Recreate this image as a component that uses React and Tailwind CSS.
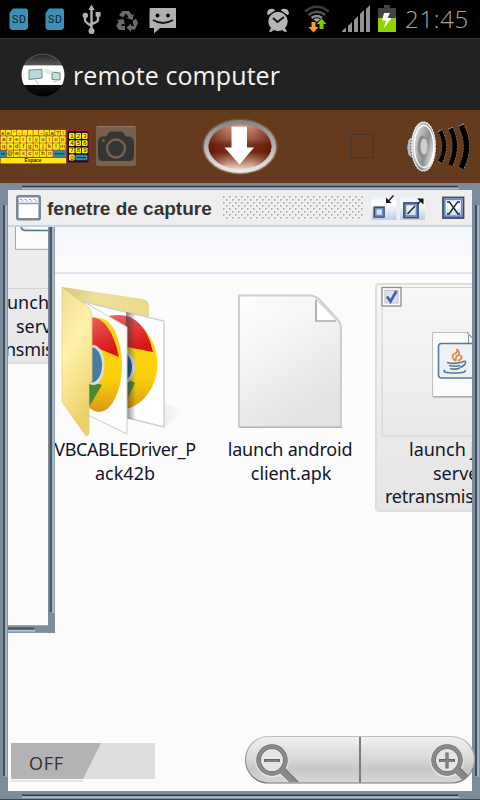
import React from "react";

function SdCard() {
  return (
    <svg width="20" height="23" viewBox="0 0 20 23">
      <path d="M4 0.5H17.5L19 2V20L17 22H2.5L0.5 20V5Z" fill="#3c8fb5" />
      <text x="10" y="15" textAnchor="middle" fontSize="10.5" fontFamily="Roboto, sans-serif" textLength="14" fill="#0b1c26">SD</text>
    </svg>
  );
}

function StatusBar() {
  return (
    <div className="flex h-[38px] w-full shrink-0 bg-black">
      <div className="flex items-start pl-[9px] pt-[8px]">
        <SdCard />
        <div className="w-[16px]" />
        <SdCard />
      </div>
      <svg className="shrink-0" width="182" height="38" viewBox="65 0 182 38">
        <g stroke="#b1b1b1" fill="none" strokeWidth="2.4">
          <path d="M91.5 8V31M85 16V20Q85 22 91.5 26M98 15V20Q98 22 91.5 24" />
        </g>
        <g fill="#b1b1b1">
          <path d="M91.5 4.5L94.7 10H88.3Z" />
          <circle cx="85.3" cy="15.5" r="2.7" />
          <rect x="95.6" y="12" width="5" height="4.6" />
          <circle cx="91.5" cy="31" r="3" />
        </g>
        <g fill="#6b6b6b">
          <path d="M122.5 11H129L132 15L134 14L132.5 20L126.500 18L128.500 17L126 13.500L123 17.500L119 15Z" />
          <path d="M117 20L123.500 19L125 24.500L122.700 23.500L121 26H125V30H119L116.200 26L118.800 21.500Z" />
          <path d="M132.500 21L136 18.500L138 23L135 29.500H131V32L126.500 27.500L131 23.500V26H134Z" />
        </g>
        <path d="M150 8H176V28H160L154 33.500V28H149.500V9Z" fill="#b1b1b1" />
        <circle cx="157.500" cy="15.500" r="1.900" />
        <circle cx="168" cy="15.500" r="1.900" />
        <path d="M153 20Q163 26 173 20" fill="none" stroke="#111" strokeWidth="1.800" />
      </svg>
      <svg className="shrink-0" width="158" height="38" viewBox="247 0 158 38">
        <g fill="#b5b5b5">
          <circle cx="278" cy="21.500" r="9.700" />
          <path d="M267 14Q267 8 274 9L275 10.500L268.500 15ZM289 14Q289 8 282 9L281 10.500L287.500 15Z" />
          <path d="M271 28L269 31.500L271 32L274 30ZM285 28L287 31.500L285 32L282 30Z" />
        </g>
        <path d="M273 18L277.500 22L284 17" fill="none" stroke="#111" strokeWidth="1.800" />
        <g fill="none" strokeWidth="2.600">
          <path d="M305 11.500Q316.800 2 328.700 11.500" stroke="#3b3b3b" />
          <path d="M308.500 15Q316.800 8.500 325.200 15" stroke="#555" />
          <path d="M311.500 18Q316.800 14 322 18" stroke="#8b8b8b" />
        </g>
        <path d="M313.500 19.500Q316.800 17 320 19.500L316.800 22Z" fill="#aaa" />
        <path d="M311.500 22H315.500V27H318.500L313.500 32.500L308.500 27H311.500Z" fill="#ff9b35" />
        <path d="M319.500 29V24H316.500L321.500 18.500L326.500 24H323.500V29Z" fill="#7fc500" />
        <g fill="#929292">
          <path d="M342 32V31L346 27.500V32Z" />
          <path d="M348 32V26L352 22V32Z" />
          <path d="M354 32V20L358 16V32Z" />
          <path d="M360 32V14L364 10V32Z" />
          <path d="M366 32V9L370 5V32Z" />
        </g>
        <path d="M384 5H390V8H396V18H378V8H384Z" fill="#434343" />
        <rect x="378" y="18" width="18" height="14" fill="#90d300" />
        <path d="M384 13H390L387.500 18H391.500L384 28L386 20.500H382Z" fill="#fff" />
      </svg>
      <div className="whitespace-nowrap font-['Open_Sans',sans-serif] text-[24px] font-light leading-[37px] tracking-[0.7px] text-[#a6a6a6]">
        21:45
      </div>
    </div>
  );
}

function AppLogo() {
  return (
    <svg width="44" height="46" viewBox="21 52 44 46">
      <defs>
        <linearGradient id="orb" x1="0" y1="0" x2="0" y2="1">
          <stop offset="0" stopColor="#222" />
          <stop offset="0.260" stopColor="#555" />
          <stop offset="0.290" stopColor="#fff" />
          <stop offset="0.720" stopColor="#fff" />
          <stop offset="0.740" stopColor="#111" />
          <stop offset="1" stopColor="#000" />
        </linearGradient>
      </defs>
      <circle cx="43" cy="75" r="21.500" fill="url(#orb)" />
      <path d="M25 64Q31 54.500 43 54Q55 54.500 61 64" fill="none" stroke="#777" strokeWidth="0.600" />
      <path d="M29 70L42 69.500V78L29 79.500Z" fill="#b9dadb" stroke="#6a787c" strokeWidth="0.900" />
      <path d="M52 72L60 73V80L52 79.500Z" fill="#c2e0d8" stroke="#6a787c" strokeWidth="0.900" />
      <path d="M42 70Q48 67 53 72L49 75Z" fill="#dfeee2" />
      <path d="M35 79L38 84M56 80V82H53" stroke="#ccc" fill="none" />
    </svg>
  );
}

function TitleBar() {
  return (
    <header className="flex h-[72px] w-full shrink-0 items-start border-t border-[#343434] bg-[#222222] pl-[21px]">
      <div className="pt-[13px]"><AppLogo /></div>
      <h1 className="whitespace-nowrap pl-[8px] pt-[18px] font-['Open_Sans',sans-serif] text-[25px] leading-[36px] tracking-[0.08px] text-[#f4f4f4]">
        remote computer
      </h1>
    </header>
  );
}

const KEY_ROWS = ["ée\"-:,_-ça?!", "azertyuiop", "qsdfghjklm"];

function Keyboard() {
  const keyText = { fontFamily: "Liberation Sans, sans-serif", fontWeight: 400, fill: "#2c2500" };
  return (
    <svg width="90" height="38" viewBox="0 127 90 38">
      <rect x="0" y="128.500" width="67" height="34.500" fill="#a8461f" />
      <rect x="66.500" y="128.500" width="23" height="34.500" fill="#ab1734" />
      <rect x="67.500" y="130" width="21" height="31.500" rx="1.500" fill="#141414" />
      {KEY_ROWS.map((row, r) =>
        [...row].map((k, i) => {
          const step = 65.5 / row.length;
          const y = r === 0 ? 129 : 128.300 + r * 7;
          return (
            <g key={r + "-" + i}>
              <rect x={0.600 + i * step} y={y} width={step - 0.600} height={r === 0 ? 5.400 : 6.400} rx="0.700" fill="#ffe71c" />
              <text x={0.300 + i * step + step / 2} y={y + 4.700} textAnchor="middle" fontSize="6" style={keyText}>{k}</text>
            </g>
          );
        })
      )}
      <rect x="0" y="149.500" width="6.300" height="6.500" fill="#2a8ba5" />
      {[..."@wxcvbn"].map((k, i) => (
        <g key={k}>
          <rect x={7 + i * 6.600} y="149.500" width="6" height="6.400" fill="#ffe71c" />
          <text x={10 + i * 6.600} y="154.400" textAnchor="middle" fontSize="6" style={keyText}>{k}</text>
        </g>
      ))}
      <rect x="53" y="149.500" width="13" height="6.500" fill="#2a8ba5" />
      <path d="M54.500 152.800H64.500M1 152.800H5" stroke="#153c48" />
      <rect x="0.700" y="157" width="65.300" height="5.300" fill="#ffe71c" />
      <text x="33" y="161.300" textAnchor="middle" fontSize="4.800" style={{ ...keyText, fontWeight: 700 }}>Espace</text>
      {[..."1234567890"].map((k, i) => (
        <g key={k}>
          <rect x={69 + (i % 3) * 6.500} y={132 + Math.floor(i / 3) * 7.200} width="5.600" height="5.900" rx="1" fill="#ffe71c" />
          <text x={71.800 + (i % 3) * 6.500} y={137 + Math.floor(i / 3) * 7.200} textAnchor="middle" fontSize="6" style={keyText}>{k}</text>
        </g>
      ))}
      <rect x="75.500" y="153.700" width="12" height="5.600" rx="1" fill="#2a8ba5" />
      <path d="M77 156.500H86" stroke="#153c48" />
    </svg>
  );
}

function Camera() {
  return (
    <div className="flex h-[40px] w-[40px] items-center justify-center rounded-[2px] border-t border-[#917866] bg-[#7a604c]">
      <svg width="38" height="36" viewBox="97 128 38 36">
        <path d="M98 142Q98 137 103 136.500H105Q107 136.500 108 133.500Q109 131.500 111 131.500H121Q123 131.500 124 133.500Q125 136.500 127 136.500H129Q134 137 134 142V155Q134 161 129 161H103Q98 161 98 155Z" fill="#353535" />
        <circle cx="116" cy="148.500" r="9" fill="none" stroke="#7a604c" strokeWidth="2.400" />
        <circle cx="103.500" cy="140.500" r="1.500" fill="#7a604c" />
      </svg>
    </div>
  );
}

function DownloadOrb() {
  return (
    <svg width="78" height="60" viewBox="201 116 78 60">
      <defs>
        <linearGradient id="ring" x1="0" y1="0" x2="0" y2="1">
          <stop offset="0" stopColor="#858382" />
          <stop offset="0.500" stopColor="#b8b2af" />
          <stop offset="1" stopColor="#efeceb" />
        </linearGradient>
        <linearGradient id="disc" x1="0" y1="0" x2="0" y2="1">
          <stop offset="0" stopColor="#c28e7d" />
          <stop offset="0.330" stopColor="#a05a44" />
          <stop offset="0.460" stopColor="#762f1a" />
          <stop offset="0.620" stopColor="#71290f" />
          <stop offset="1" stopColor="#f0cdbc" />
        </linearGradient>
        <linearGradient id="side" x1="0" x2="1">
          <stop offset="0" stopColor="#5a1405" stopOpacity="0.650" />
          <stop offset="0.300" stopColor="#5a1405" stopOpacity="0" />
          <stop offset="0.700" stopColor="#5a1405" stopOpacity="0" />
          <stop offset="1" stopColor="#5a1405" stopOpacity="0.650" />
        </linearGradient>
      </defs>
      <ellipse cx="240" cy="145.500" rx="37.500" ry="28" fill="url(#ring)" opacity="0.350" />
      <ellipse cx="240" cy="145.500" rx="36" ry="26.500" fill="url(#ring)" />
      <ellipse cx="240" cy="145.500" rx="31.500" ry="22.500" fill="url(#disc)" />
      <ellipse cx="240" cy="145.500" rx="31.500" ry="22.500" fill="url(#side)" />
      <path d="M231.500 125.500H247V146.500H254L239.500 163.500L224.500 146.500H231.500Z" fill="#fff" />
    </svg>
  );
}

function Speaker() {
  return (
    <svg width="66" height="54" viewBox="405 119 66 54">
      <defs>
        <linearGradient id="metal" x1="0" x2="1" y2="0.500">
          <stop offset="0" stopColor="#f4f4f4" />
          <stop offset="0.450" stopColor="#b5b5b5" />
          <stop offset="0.700" stopColor="#8d8d8d" />
          <stop offset="1" stopColor="#e8e8e8" />
        </linearGradient>
      </defs>
      <path d="M413 134L408 139Q405.500 147 408 154L413 158Z" fill="#bbb" stroke="#222" strokeWidth="0.700" />
      <ellipse cx="423.500" cy="145.500" rx="12" ry="24.700" fill="url(#metal)" stroke="#f7f7f7" strokeWidth="1.200" />
      <ellipse cx="423.500" cy="145.500" rx="12.600" ry="25.300" fill="none" stroke="#222" strokeWidth="0.800" strokeDasharray="1.500 1.500" />
      <ellipse cx="424" cy="145.500" rx="9.800" ry="21" fill="none" stroke="#fff" strokeWidth="1.300" />
      <ellipse cx="422.500" cy="145.500" rx="5" ry="11" fill="#8b8b8b" />
      <ellipse cx="424" cy="145.500" rx="3.500" ry="8" fill="#cfcfcf" />
      <g fill="none" stroke="#ddd" strokeDasharray="1 2">
        <path d="M440 129.500Q448.500 145 440 161.500" strokeWidth="4.600" />
        <path d="M450.500 127Q459 145 450.500 164.500" strokeWidth="5.200" />
        <path d="M461 124Q472 145 461 167.500" strokeWidth="6.100" />
      </g>
      <g fill="none" stroke="#000">
        <path d="M440 130Q448.500 145 440 161" strokeWidth="4" />
        <path d="M450.500 127.500Q459 145 450.500 164" strokeWidth="4.600" />
        <path d="M461 124.500Q472 145 461 167" strokeWidth="5.500" />
      </g>
    </svg>
  );
}

function Toolbar() {
  return (
    <div className="flex h-[73px] w-full shrink-0 items-center bg-[#643b1c]">
      <Keyboard />
      <div className="-mt-[2px] pl-[6px]"><Camera /></div>
      <div className="pl-[65px]"><DownloadOrb /></div>
      <div className="-mt-[1px] ml-[71px] h-[24px] w-[24px] border border-[#49362a]" />
      <div className="pl-[31px]"><Speaker /></div>
    </div>
  );
}

function WindowTitle() {
  return (
    <div className="flex h-[37px] shrink-0 items-start border-b-2 border-[#c5d6e6] bg-[#eeeeee] pl-[8px]">
      <svg className="mt-[5px] shrink-0" width="25" height="26" viewBox="0 0 25 26">
        <rect x="1.300" y="1.300" width="22.400" height="23" rx="1.500" fill="#fff" stroke="#788896" strokeWidth="2.600" />
        <path d="M3 8.500H22" stroke="#8b9aa8" strokeWidth="1.500" />
        <path d="M4 4.500H21M5.500 6H21" stroke="#8d9ddb" strokeWidth="1.200" strokeDasharray="2 2.500" />
      </svg>
      <h2 className="w-[181px] shrink-0 whitespace-nowrap pl-[6px] pt-[5px] font-['Liberation_Sans',Arial,sans-serif] text-[19px] font-bold leading-[28px] text-[#333333]">
        fenetre de capture
      </h2>
      <svg className="mt-[5px] shrink-0" width="141" height="27">
        <defs>
          <pattern id="grip" width="6" height="6" patternUnits="userSpaceOnUse">
            <rect x="0.500" y="0.500" width="2" height="1.500" fill="#fff" />
            <rect x="3.500" y="3.500" width="2" height="1.500" fill="#fff" />
            <rect x="1" y="1" width="1.500" height="1.500" fill="#8f9dac" />
            <rect x="4" y="4" width="1.500" height="1.500" fill="#8f9dac" />
          </pattern>
          <linearGradient id="btn" x1="0" y1="0" x2="0" y2="1">
            <stop offset="0" stopColor="#e5edf6" />
            <stop offset="0.350" stopColor="#fff" />
            <stop offset="1" stopColor="#b8cfe5" />
          </linearGradient>
        </defs>
        <rect width="141" height="25" fill="url(#grip)" />
      </svg>
      <svg className="ml-[7px] mt-[3px] shrink-0" width="98" height="30" viewBox="370 193 98 30">
        <rect x="371.500" y="195" width="25" height="25" fill="url(#btn)" />
        <rect x="400" y="195" width="25" height="25" fill="url(#btn)" />
        <g fill="none">
          <rect x="374.200" y="207.200" width="9.800" height="9.800" stroke="#404a5c" strokeWidth="1.600" />
          <rect x="375.800" y="208.800" width="6.800" height="6.800" stroke="#6987cf" strokeWidth="1.500" />
          <rect x="404" y="203" width="14" height="14.500" stroke="#404a5c" strokeWidth="1.800" />
          <rect x="405.600" y="204.600" width="10.800" height="11.300" stroke="#6987cf" strokeWidth="1.500" />
          <path d="M407.500 214L415 206M417.500 204L422 200" stroke="#202020" strokeWidth="1.400" />
          <path d="M393.500 195.500L387.500 202" stroke="#222" strokeWidth="1.500" />
        </g>
        <path d="M386 197.500V203H391.500Z M417 198.500H423.500V204.500Z" fill="#161616" />
        <rect x="443" y="197.500" width="20.500" height="20.500" fill="url(#btn)" stroke="#404a5c" strokeWidth="1.800" />
        <rect x="444.800" y="199.300" width="16.900" height="16.900" fill="none" stroke="#6987cf" strokeWidth="1.700" />
        <path d="M447 202H449.500L458 214H460M460 202H457.500L449 214H447" fill="none" stroke="#1e2635" strokeWidth="1.400" />
      </svg>
    </div>
  );
}

function NestedPane() {
  return (
    <div className="flex h-[406px] w-[47px] shrink-0">
      <div className="flex w-[40px] shrink-0 flex-col">
        <div className="flex h-[137px] flex-col overflow-hidden whitespace-nowrap border-b-2 border-[#dedede] bg-linear-to-b from-[#eeeeee] to-[#e8e8e8] font-['Noto_Sans','Open_Sans',sans-serif] text-[18px] leading-[23.500px] text-[#141428]">
          <svg className="shrink-0" width="40" height="62" viewBox="8 227 40 62">
            <path d="M15 227V249H48V227Z" fill="#fcfcfc" />
            <path d="M15.500 227V249.300H48" stroke="#a5a5a5" fill="none" />
            <path d="M21 227Q22 230.500 25 230.500H48" stroke="#547592" strokeWidth="1.500" fill="#e9eef2" />
            <path d="M8 288.500H48" stroke="#d2d6d6" />
          </svg>
          <div className="-ml-[1px] pt-[2px]">unch</div>
          <div className="pl-[8px]">serv</div>
          <div className="-ml-[3px] tracking-[-0.300px]">nsmis</div>
        </div>
        <div className="flex-1 bg-[#fcfcfc]" />
        <svg className="shrink-0" width="40" height="8">
          <rect width="40" height="8" fill="#7b8c9a" />
          <path d="M0 0.500H40" stroke="#98a6b2" />
          <path d="M0 3.500H26" stroke="#485058" strokeWidth="2" />
          <path d="M0 5.800H27" stroke="#b0c8de" strokeWidth="1.500" />
          <path d="M0 7.500H40" stroke="#8496a5" />
        </svg>
      </div>
      <svg className="shrink-0" width="7" height="406">
        <rect width="7" height="406" fill="#7b8c9a" />
        <path d="M2.800 0V385" stroke="#485058" strokeWidth="2" />
        <path d="M5.300 0V386" stroke="#a9bfd6" strokeWidth="2" />
      </svg>
    </div>
  );
}

function ChromeFolder() {
  return (
    <svg width="130" height="160" viewBox="60 280 130 160">
      <defs>
        <linearGradient id="front" x1="0" y1="0" x2="0.300" y2="1">
          <stop offset="0" stopColor="#ecdd91" />
          <stop offset="0.450" stopColor="#fff2ac" />
          <stop offset="1" stopColor="#efcf68" />
        </linearGradient>
        <linearGradient id="back" x1="0" x2="1">
          <stop offset="0" stopColor="#d8c677" />
          <stop offset="0.400" stopColor="#eee198" />
          <stop offset="1" stopColor="#ead98c" />
        </linearGradient>
        <linearGradient id="red" x1="0" y1="0" x2="0.500" y2="1">
          <stop offset="0" stopColor="#ed6a60" />
          <stop offset="1" stopColor="#d81516" />
        </linearGradient>
        <linearGradient id="yellow" x1="0" y1="0" x2="0" y2="1">
          <stop offset="0" stopColor="#fcd719" />
          <stop offset="0.650" stopColor="#fbcf0b" />
          <stop offset="1" stopColor="#d89a16" />
        </linearGradient>
        <linearGradient id="shade" x1="0" x2="1">
          <stop offset="0" stopColor="#333" stopOpacity="0.600" />
          <stop offset="1" stopColor="#333" stopOpacity="0" />
        </linearGradient>
        <linearGradient id="floor" x1="0" x2="1">
          <stop offset="0" stopColor="#d8d8d8" />
          <stop offset="1" stopColor="#fcfcfc" />
        </linearGradient>
        <clipPath id="rearPage"><path d="M126 312L164 321V427L126 418Z" /></clipPath>
        <clipPath id="nearPage"><path d="M91 311L127 327V434L88 415Z" /></clipPath>
      </defs>
      <path d="M164 402L184 411L165 427Z" fill="url(#floor)" opacity="0.400" />
      <path d="M62 287L143 299Q149 301 149 306V340H80Z" fill="url(#back)" />
      <path d="M84 302L164 321V427L120 416Z" fill="#fff" stroke="#d1d1d1" strokeWidth="1.500" />
      <ellipse cx="118" cy="364" rx="39.500" ry="46" fill="url(#yellow)" />
      <path d="M104 317Q143 306 153 352L127 347L112 350Z" fill="url(#red)" />
      <g clipPath="url(#rearPage)">
        <path d="M112 370L135 383L126 402Z" fill="#478a32" />
        <ellipse cx="121" cy="367" rx="14" ry="18" fill="#d9e2e5" />
        <ellipse cx="121" cy="367" rx="11" ry="15" fill="#19589e" />
        <rect x="126" y="300" width="10" height="130" fill="url(#shade)" />
      </g>
      <path d="M84 302L127 327V434L88 415Z" fill="#fdfdfd" stroke="#cccccc" />
      <g clipPath="url(#nearPage)">
        <ellipse cx="99" cy="365" rx="23" ry="47" fill="url(#yellow)" />
        <path d="M80 320Q108 307 119 357L90 345Z" fill="url(#red)" />
        <path d="M85 380L102 385L89 407L85 410Z" fill="#4a892f" />
        <ellipse cx="93" cy="365" rx="11.500" ry="20" fill="#d7dde0" />
        <ellipse cx="92" cy="365" rx="10" ry="17.500" fill="#477ba3" />
      </g>
      <path d="M62 287L88 307Q91 309 92 315V381L89 384V434L86 436L62 402Z" fill="url(#front)" stroke="#e1cb79" strokeWidth="0.700" />
    </svg>
  );
}

function BlankDoc() {
  return (
    <svg width="120" height="160" viewBox="230 280 120 160">
      <defs>
        <linearGradient id="paper" x1="0" y1="0" x2="0.500" y2="1">
          <stop offset="0" stopColor="#fdfdfd" />
          <stop offset="0.350" stopColor="#f6f6f6" />
          <stop offset="1" stopColor="#e3e3e3" />
        </linearGradient>
      </defs>
      <path d="M239 295.500H311Q315 296 319 299L337 319Q341 323 341 329V427H239Z" fill="url(#paper)" stroke="#cdcdcd" strokeWidth="2" />
      <path d="M240 427.500H341" stroke="#b2b2b2" />
      <path d="M316 300V321.500H336Z" fill="#fff" />
      <path d="M316 300V321H336" fill="none" stroke="#a6a6a6" strokeWidth="1.700" />
      <path d="M316 299L338 321" stroke="#d8d8d8" strokeWidth="1.500" />
    </svg>
  );
}

function JavaTile() {
  return (
    <svg className="shrink-0" width="97" height="155" viewBox="375 283 97 155">
      <defs>
        <linearGradient id="tile" x1="0" y1="0" x2="0" y2="1">
          <stop offset="0" stopColor="#f6f7f7" />
          <stop offset="1" stopColor="#e9e9e9" />
        </linearGradient>
      </defs>
      <path d="M476 287.500H382V436H476Z" fill="url(#tile)" stroke="#cfd3d3" />
      <rect x="382" y="287.500" width="19" height="18.500" fill="#f8f8f8" stroke="#8b8f91" strokeWidth="1.300" />
      <rect x="385" y="290.500" width="13" height="12.500" fill="#dfe3e8" stroke="#bcc2ca" />
      <path d="M387 296.500L390.500 301.500L396.500 291" fill="none" stroke="#4761ae" strokeWidth="2.800" />
      <path d="M432.500 332.500H467L476 341V396.500H432.500Z" fill="#fbfbfa" stroke="#bebebe" />
      <path d="M433 397H472" stroke="#9d9d9d" />
      <path d="M467 332L472 338M468.500 335V344" fill="none" stroke="#8c8c8c" />
      <rect x="438.500" y="343.500" width="42" height="34.500" rx="3" fill="#eef1f3" stroke="#55799a" strokeWidth="1.600" />
      <path d="M456 361Q450 357 454 354Q459 352 456.500 349Q462 353 457 356Q455 358 456 361M458 361Q465 357 459 355" fill="none" stroke="#ed8338" strokeWidth="1.700" />
      <g fill="none" stroke="#507a99" strokeWidth="1.600">
        <path d="M447 362.500Q455 364.500 462 362M449 365.500Q455 367 460 365.500M450 368.500Q455 370 460 368M462 362Q467 360 465 364Q463 367 460 367M445 370Q441 373 455 373Q467 373 465 370" />
      </g>
    </svg>
  );
}

const labelClass =
  "whitespace-nowrap font-['Noto_Sans','Open_Sans',sans-serif] text-[18px] leading-[23.500px] text-[#141428]";

function FileList() {
  return (
    <div className="flex min-w-0 flex-1 flex-col overflow-hidden">
      <div className="h-[47px] shrink-0 border-b-2 border-[#dde8f4] bg-linear-to-b from-[#f4f7fb] to-[#fcfcfc]" />
      <div className="flex items-start pt-[6px]">
        <div className="flex w-[140px] shrink-0 flex-col items-center">
          <ChromeFolder />
          <div className={labelClass + " -mt-[2px] tracking-[-0.400px]"}>VBCABLEDriver_P</div>
          <div className={labelClass}>ack42b</div>
        </div>
        <div className="ml-[20px] flex w-[150px] shrink-0 flex-col items-center">
          <BlankDoc />
          <div className={labelClass + " -mt-[2px] tracking-[-0.200px]"}>launch android</div>
          <div className={labelClass + " pl-[2px] tracking-[-0.100px]"}>client.apk</div>
        </div>
        <div className="ml-[10px] mt-[3px] flex h-[229px] w-[120px] shrink-0 flex-col rounded-[4px] border-2 border-[#dedede] bg-linear-to-b from-[#f7f7f7] to-[#e5e5e5]">
          <div className="-ml-[2px] -mt-[2px] flex"><JavaTile /></div>
          <div className={labelClass + " pl-[32px]"}>launch java</div>
          <div className={labelClass + " pl-[56px]"}>server</div>
          <div className={labelClass + " pl-[8px] tracking-[-0.200px]"}>retransmission</div>
        </div>
      </div>
    </div>
  );
}

function VerticalEdge() {
  return (
    <svg className="shrink-0" width="8" height="601">
      <rect width="8" height="601" fill="#7b8c9a" />
      <path d="M4 15V586" stroke="#454e57" strokeWidth="2" />
      <path d="M6.200 15V587" stroke="#a3b8ce" strokeWidth="2" />
    </svg>
  );
}

function HorizontalEdge({ height, dark }) {
  return (
    <svg className="shrink-0" width="480" height={height}>
      <rect width="480" height={height} fill="#7b8c9a" />
      <path d={`M22 ${dark}H458`} stroke="#343c44" strokeWidth="1.500" />
      <path d={`M22 ${dark + 2}H459`} stroke="#a9bfd5" strokeWidth="1.600" />
    </svg>
  );
}

function CaptureWindow() {
  return (
    <div className="flex flex-1 flex-col">
      <HorizontalEdge height={7} dark={3.5} />
      <div className="flex h-[601px]">
        <VerticalEdge />
        <div className="flex w-[464px] flex-col bg-[#fcfcfc]">
          <WindowTitle />
          <div className="flex flex-1">
            <NestedPane />
            <FileList />
          </div>
        </div>
        <VerticalEdge />
      </div>
      <HorizontalEdge height={8} dark={4.2} />
      <div className="h-[1px] bg-[#643b1c]" />
    </div>
  );
}

function OffSwitch() {
  return (
    <div className="absolute left-[11px] top-[743px] flex h-[39px] w-[144px] flex-col">
      <div className="h-[36px] bg-[#dedede]">
        <div className="h-[36px] w-[90px] bg-[#b3b3b3] pl-[18px] font-['Open_Sans',sans-serif] text-[18px] leading-[40px] tracking-[0.700px] text-[#303030] [clip-path:polygon(0_0,100%_0,72px_100%,0_100%)]">
          OFF
        </div>
      </div>
      <div className="mt-[1px] h-[2px] w-[72px] bg-[#e4e4e4]" />
    </div>
  );
}

function ZoomControls() {
  return (
    <svg className="absolute left-[244px] top-[735px]" width="234" height="50" viewBox="244 735 234 50">
      <defs>
        <linearGradient id="pill" x1="0" y1="0" x2="0" y2="1">
          <stop offset="0" stopColor="#f1f1f1" />
          <stop offset="0.500" stopColor="#d7d7d7" />
          <stop offset="0.700" stopColor="#c7c7c7" />
          <stop offset="1" stopColor="#d8d8d8" />
        </linearGradient>
        <linearGradient id="pillEdge" x1="0" y1="0" x2="0" y2="1">
          <stop offset="0" stopColor="#bdbdbd" />
          <stop offset="1" stopColor="#777" />
        </linearGradient>
        <clipPath id="pillClip"><path d="M246 737H474V782H246Z" /></clipPath>
        <clipPath id="pillEnd"><rect x="246" y="737" width="228" height="45.500" rx="23" /></clipPath>
      </defs>
      <rect x="245.500" y="736.500" width="229" height="46.500" rx="23" fill="url(#pill)" stroke="url(#pillEdge)" strokeWidth="1.200" />
      <rect x="359" y="737" width="2" height="45.500" fill="#7d7d7d" />
      <g clipPath="url(#pillEnd)">
        <g clipPath="url(#pillClip)">
          <g fill="none" stroke="#eee" opacity="0.700">
            <circle cx="272" cy="761" r="13.500" strokeWidth="6.500" />
            <path d="M281 770L297 786" strokeWidth="8.500" />
            <circle cx="447" cy="761" r="13.500" strokeWidth="6.500" />
          </g>
          <g fill="none" stroke="#696969">
            <circle cx="272" cy="760" r="13.300" strokeWidth="4.800" />
            <path d="M281.500 769.500L297 785" strokeWidth="7" />
            <circle cx="447" cy="760" r="13.300" strokeWidth="4.800" />
            <path d="M457 769.500L472 784" strokeWidth="7" />
          </g>
          <g fill="none" stroke="#8a8a8a">
            <circle cx="272" cy="760.300" r="13.500" strokeWidth="3.600" />
            <path d="M281 769.500L297 785.500" strokeWidth="5.600" />
            <circle cx="447" cy="760.300" r="13.500" strokeWidth="3.600" />
            <path d="M456.500 769.500L472 784.500" strokeWidth="5.600" />
          </g>
          <circle cx="272" cy="760.300" r="10.900" fill="#e4e4e4" />
          <circle cx="447" cy="760.300" r="10.900" fill="#e4e4e4" />
          <path d="M264 760.500H280M439 760.500H455M447 752.500V768.500" stroke="#666" strokeWidth="3.200" />
          <path d="M265 761H279M440 761H454M447 753.500V767.500" stroke="#8a8a8a" strokeWidth="1.600" />
        </g>
      </g>
    </svg>
  );
}

export default function App() {
  return (
    <div className="relative flex h-[800px] w-[480px] flex-col overflow-hidden bg-black">
      <StatusBar />
      <TitleBar />
      <Toolbar />
      <CaptureWindow />
      <OffSwitch />
      <ZoomControls />
    </div>
  );
}
